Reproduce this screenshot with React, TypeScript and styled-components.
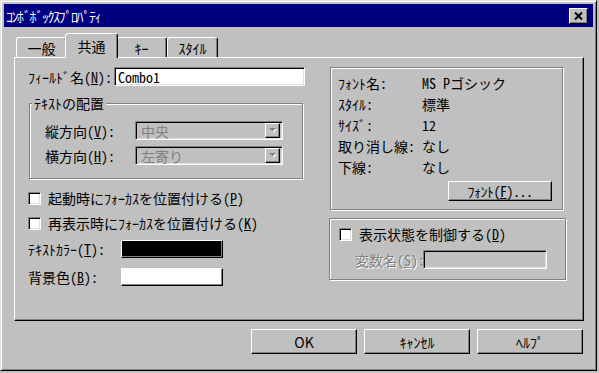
import { FC, ReactNode } from 'react';
import styled, { createGlobalStyle, css } from 'styled-components';

const GlobalStyle = createGlobalStyle`
  html, body {
    margin: 0;
    padding: 0;
    background: #c0c0c0;
  }
  body {
    font-family: 'Noto Sans CJK JP', sans-serif;
    font-feature-settings: 'hwid' 1;
    font-size: 14px;
    line-height: 18px;
    color: #000;
  }
`;

const raised = css`
  border: 1px solid;
  border-color: #fff #000 #000 #fff;
  box-shadow: inset -1px -1px #808080;
`;

const sunken = css`
  border: 1px solid;
  border-color: #808080 #fff #fff #808080;
  box-shadow: inset 1px 1px #000, inset -1px -1px #dfdfdf;
`;

const etched = css`
  border: 1px solid #808080;
  box-shadow: inset 1px 1px #fff, 1px 1px #fff;
`;

const Window = styled.div`
  box-sizing: border-box;
  width: 597px;
  height: 371px;
  display: flex;
  flex-direction: column;
  padding: 3px;
  border: 1px solid;
  border-color: #dfdfdf #000 #000 #dfdfdf;
  box-shadow: inset 1px 1px #fff, inset -1px -1px #808080;
`;

const TitleBar = styled.div`
  height: 23px;
  flex: none;
  display: flex;
  align-items: center;
  justify-content: space-between;
  padding: 0 5px 0 2px;
  background: #000080;
  color: #fff;
`;

const TitleText = styled.span`
  white-space: nowrap;
  letter-spacing: -1.5px;
`;

const CloseButton = styled.div`
  box-sizing: border-box;
  width: 19px;
  height: 16px;
  display: flex;
  align-items: center;
  justify-content: center;
  background: #c0c0c0;
  ${raised}
`;

const Body = styled.div`
  flex: 1;
  display: flex;
  flex-direction: column;
  padding: 6px 9px 0 10px;
`;

const TabStrip = styled.div`
  height: 24px;
  display: flex;
  align-items: flex-end;
  padding-left: 2px;
`;

interface TabProps {
  $active?: boolean;
  $width: number;
}

const Tab = styled.div<TabProps>`
  box-sizing: border-box;
  width: ${({ $width }) => $width}px;
  height: 20px;
  display: flex;
  align-items: center;
  justify-content: center;
  background: #c0c0c0;
  border: 1px solid;
  border-bottom: none;
  border-color: #fff #000 transparent #fff;
  border-radius: 3px 3px 0 0;
  box-shadow: inset -1px 0 #808080;
  ${({ $active }) =>
    $active &&
    css`
      position: relative;
      z-index: 1;
      height: 25px;
      margin: 0 -2px -1px;
    `}
`;

const Panel = styled.div`
  box-sizing: border-box;
  height: 264px;
  background: #c0c0c0;
  ${raised}
  padding: 9px 0 0 13px;
  display: grid;
  grid-template-columns: 277px 237px;
  column-gap: 24px;
  align-items: start;
`;

const Column = styled.div`
  display: flex;
  flex-direction: column;
`;

const Row = styled.div<{ $height?: number; $gap?: number }>`
  display: flex;
  align-items: center;
  height: ${({ $height }) => $height ?? 18}px;
  margin-top: ${({ $gap }) => $gap ?? 0}px;
  white-space: nowrap;
`;

const Label = styled.span<{ $width?: number; $disabled?: boolean; $indent?: number }>`
  flex: none;
  width: ${({ $width }) => ($width ? `${$width}px` : 'auto')};
  margin-left: ${({ $indent }) => $indent ?? 0}px;
  ${({ $disabled }) =>
    $disabled &&
    css`
      color: #808080;
      text-shadow: 1px 1px #fff;
    `}
`;

const Key = styled.span`
  text-decoration: underline;
  text-underline-offset: 1px;
`;

const TextBox = styled.div<{ $width: number; $disabled?: boolean }>`
  box-sizing: border-box;
  width: ${({ $width }) => $width}px;
  height: 19px;
  display: flex;
  align-items: center;
  padding-left: 3px;
  background: ${({ $disabled }) => ($disabled ? '#c0c0c0' : '#fff')};
  ${sunken}
`;

const GroupBox = styled.div`
  position: relative;
  box-sizing: border-box;
  width: 274px;
  height: 76px;
  margin: 17px 0 0 1px;
  padding: 17px 0 0 15px;
  ${etched}
`;

const Legend = styled.span`
  position: absolute;
  top: -10px;
  left: 2px;
  padding: 0 2px;
  background: #c0c0c0;
`;

const Combo = styled.div`
  box-sizing: border-box;
  width: 148px;
  height: 19px;
  display: flex;
  align-items: center;
  justify-content: space-between;
  padding: 2px 2px 2px 5px;
  background: #c0c0c0;
  color: #808080;
  ${sunken}
`;

const ComboButton = styled.div`
  box-sizing: border-box;
  width: 15px;
  height: 15px;
  display: flex;
  align-items: center;
  justify-content: center;
  background: #c0c0c0;
  ${raised}
`;

const CheckBox = styled.div`
  box-sizing: border-box;
  flex: none;
  width: 13px;
  height: 13px;
  margin-right: 7px;
  background: #fff;
  ${sunken}
`;

const Swatch = styled.div<{ $color: string }>`
  box-sizing: border-box;
  width: 102px;
  height: 18px;
  background: ${({ $color }) => $color};
  ${raised}
`;

const InfoFrame = styled.div`
  box-sizing: border-box;
  height: 143px;
  margin: 0 3px 0 1px;
  padding: 4px 0 0 7px;
  display: flex;
  flex-direction: column;
  ${etched}
`;

const InfoRow = styled.div`
  display: flex;
  align-items: center;
  height: 21px;
  white-space: nowrap;
`;

const Button = styled.div<{ $width: number; $height?: number }>`
  box-sizing: border-box;
  width: ${({ $width }) => $width}px;
  height: ${({ $height }) => $height ?? 25}px;
  display: flex;
  align-items: center;
  justify-content: center;
  background: #c0c0c0;
  white-space: nowrap;
  font-feature-settings: normal;
  ${raised}
`;

const FontButton = styled(Button)`
  align-self: flex-end;
  margin: 4px 10px 0 0;
  letter-spacing: -0.5px;
  font-feature-settings: 'hwid' 1;
`;

const VisibilityBox = styled.div`
  box-sizing: border-box;
  height: 62px;
  margin-top: 8px;
  padding: 6px 0 0 9px;
  ${etched}
`;

const Footer = styled.div`
  display: flex;
  justify-content: flex-end;
  gap: 7px;
  margin-top: 8px;
  padding-right: 1px;
`;

const CloseIcon = () => (
  <svg width="9" height="8" viewBox="0 0 9 8">
    <path d="M1 0.5 L8 7.5 M8 0.5 L1 7.5" stroke="#000" strokeWidth="2" />
  </svg>
);

const DownArrow = () => (
  <svg width="8" height="5" viewBox="0 0 8 5">
    <path d="M1 1 H8 L4.5 4.5 Z" fill="#fff" />
    <path d="M0 0 H7 L3.5 3.5 Z" fill="#808080" />
  </svg>
);

const ComboRow: FC<{ label: ReactNode; value: string; gap?: number }> = ({
  label,
  value,
  gap,
}) => (
  <Row $height={19} $gap={gap}>
    <Label $width={90}>{label}</Label>
    <Combo>
      <span>{value}</span>
      <ComboButton>
        <DownArrow />
      </ComboButton>
    </Combo>
  </Row>
);

const CheckRow: FC<{ children: ReactNode; gap?: number }> = ({ children, gap }) => (
  <Row $gap={gap}>
    <CheckBox />
    <span>{children}</span>
  </Row>
);

const fontInfo = [
  { label: 'ﾌｫﾝﾄ名:', value: 'MS Pゴシック' },
  { label: 'ｽﾀｲﾙ:', value: '標準' },
  { label: 'ｻｲｽﾞ:', value: '12' },
  { label: '取り消し線:', value: 'なし' },
  { label: '下線:', value: 'なし' },
];

const tabs = [
  { label: '一般', width: 51 },
  { label: '共通', width: 53, active: true },
  { label: 'ｷｰ', width: 51 },
  { label: 'ｽﾀｲﾙ', width: 51 },
];

export default function App() {
  return (
    <>
      <GlobalStyle />
      <Window>
        <TitleBar>
          <TitleText>ｺﾝﾎﾞﾎﾞｯｸｽﾌﾟﾛﾊﾟﾃｨ</TitleText>
          <CloseButton>
            <CloseIcon />
          </CloseButton>
        </TitleBar>
        <Body>
          <TabStrip>
            {tabs.map((t) => (
              <Tab key={t.label} $width={t.width} $active={t.active}>
                {t.label}
              </Tab>
            ))}
          </TabStrip>
          <Panel>
            <Column>
              <Row $height={19}>
                <Label $width={86}>
                  ﾌｨｰﾙﾄﾞ名(<Key>N</Key>):
                </Label>
                <TextBox $width={191}>Combo1</TextBox>
              </Row>
              <GroupBox>
                <Legend>ﾃｷｽﾄの配置</Legend>
                <ComboRow
                  label={
                    <>
                      縦方向(<Key>V</Key>):
                    </>
                  }
                  value="中央"
                />
                <ComboRow
                  gap={6}
                  label={
                    <>
                      横方向(<Key>H</Key>):
                    </>
                  }
                  value="左寄り"
                />
              </GroupBox>
              <CheckRow gap={10}>
                起動時にﾌｫｰｶｽを位置付ける(<Key>P</Key>)
              </CheckRow>
              <CheckRow gap={7}>
                再表示時にﾌｫｰｶｽを位置付ける(<Key>K</Key>)
              </CheckRow>
              <Row $gap={8}>
                <Label $width={93}>
                  ﾃｷｽﾄｶﾗｰ(<Key>T</Key>):
                </Label>
                <Swatch $color="#000" />
              </Row>
              <Row $gap={10}>
                <Label $width={93}>
                  背景色(<Key>B</Key>):
                </Label>
                <Swatch $color="#fff" />
              </Row>
            </Column>
            <Column>
              <InfoFrame>
                {fontInfo.map((f) => (
                  <InfoRow key={f.label}>
                    <Label $width={84}>{f.label}</Label>
                    <span>{f.value}</span>
                  </InfoRow>
                ))}
                <FontButton $width={104} $height={20}>
                  ﾌｫﾝﾄ(<Key>F</Key>)...
                </FontButton>
              </InfoFrame>
              <VisibilityBox>
                <CheckRow>
                  表示状態を制御する(<Key>D</Key>)
                </CheckRow>
                <Row $height={19} $gap={7}>
                  <Label $width={68} $indent={16} $disabled>
                    変数名(<Key>S</Key>):
                  </Label>
                  <TextBox $width={124} $disabled />
                </Row>
              </VisibilityBox>
            </Column>
          </Panel>
          <Footer>
            <Button $width={106}>OK</Button>
            <Button $width={106}>ｷｬﾝｾﾙ</Button>
            <Button $width={106}>ﾍﾙﾌﾟ</Button>
          </Footer>
        </Body>
      </Window>
    </>
  );
}
